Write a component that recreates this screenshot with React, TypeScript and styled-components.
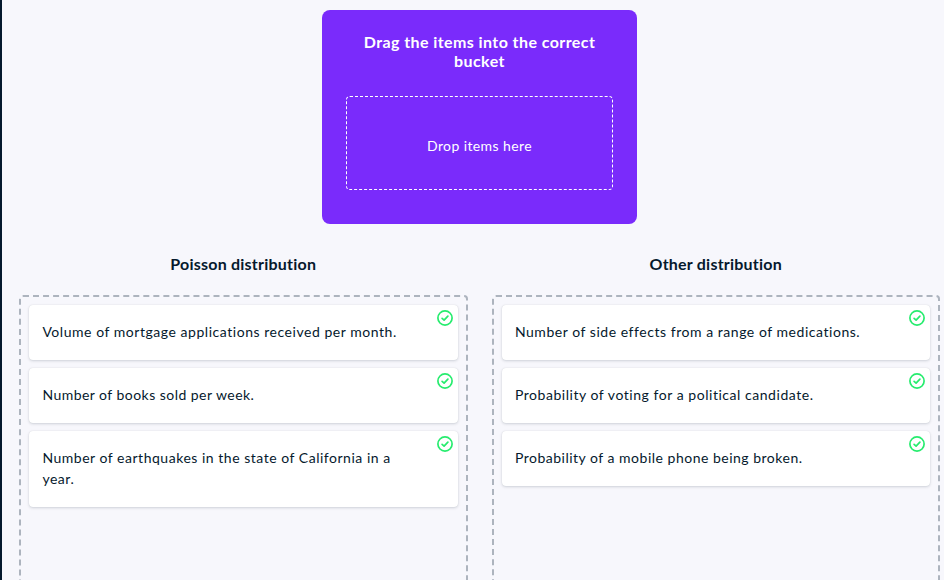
import React from 'react';
import styled, { createGlobalStyle } from 'styled-components';

const GlobalStyle = createGlobalStyle`
  *, *::before, *::after { box-sizing: border-box; }
  body {
    margin: 0;
    background: #f7f7fc;
    color: #05192d;
    font-family: Lato, 'Liberation Sans', sans-serif;
    overflow: hidden;
  }
`;

const Page = styled.main`
  height: 580px;
  padding: 10px 4px 0 17px;
  border-left: 2px solid #05192d;
  display: flex;
  flex-direction: column;
  overflow: hidden;
`;

const Source = styled.section`
  width: 315px;
  height: 214px;
  flex: none;
  align-self: center;
  padding: 22px 24px 24px;
  border-radius: 8px;
  background: #7a2bfb;
  color: #fff;
`;

const Prompt = styled.h2`
  margin: 0 0 26px;
  font-size: 16px;
  line-height: 19px;
  font-weight: 700;
  letter-spacing: 0.42px;
  text-align: center;
`;

const DropArea = styled.div`
  height: 94px;
  padding-top: 4px;
  display: flex;
  align-items: center;
  justify-content: center;
  border: 1px dashed #fff;
  border-radius: 4px;
  font-size: 14px;
  line-height: 21px;
  letter-spacing: 0.4px;
`;

const Buckets = styled.div`
  display: grid;
  grid-template-columns: 1fr 1fr;
  column-gap: 24px;
  margin-top: 30px;
`;

const Bucket = styled.section`
  display: flex;
  flex-direction: column;
`;

const BucketTitle = styled.h3`
  margin: 0 0 22px;
  font-size: 16px;
  line-height: 19px;
  font-weight: 700;
  letter-spacing: 0.22px;
  text-align: center;
`;

const BucketBody = styled.div`
  height: 320px;
  padding: 8px;
  display: flex;
  flex-direction: column;
  gap: 8px;
  border: 2px dashed #adb4be;
  border-radius: 4px;
`;

const Item = styled.div<{ $tracking: number }>`
  position: relative;
  padding: 16px 60px 18px 13.4px;
  border-radius: 4px;
  background: #fff;
  box-shadow: 0 0 1px rgba(5, 25, 45, 0.12), 0 1px 3px rgba(5, 25, 45, 0.16);
  font-size: 14px;
  line-height: 21px;
  letter-spacing: ${(p) => p.$tracking}px;
`;

const Check = styled.svg`
  position: absolute;
  top: 5px;
  right: 5px;
  width: 16px;
  height: 16px;
`;

const buckets = [
  {
    title: 'Poisson distribution',
    items: [
      { text: 'Volume of mortgage applications received per month.', tracking: 0.54 },
      { text: 'Number of books sold per week.', tracking: 0.46 },
      { text: 'Number of earthquakes in the state of California in a year.', tracking: 0.52 },
    ],
  },
  {
    title: 'Other distribution',
    items: [
      { text: 'Number of side effects from a range of medications.', tracking: 0.54 },
      { text: 'Probability of voting for a political candidate.', tracking: 0.54 },
      { text: 'Probability of a mobile phone being broken.', tracking: 0.5 },
    ],
  },
];

export default function App() {
  return (
    <>
      <GlobalStyle />
      <Page>
        <Source>
          <Prompt>Drag the items into the correct bucket</Prompt>
          <DropArea>Drop items here</DropArea>
        </Source>
        <Buckets>
          {buckets.map((bucket) => (
            <Bucket key={bucket.title}>
              <BucketTitle>{bucket.title}</BucketTitle>
              <BucketBody>
                {bucket.items.map((item) => (
                  <Item key={item.text} $tracking={item.tracking}>
                    {item.text}
                    <Check viewBox="0 0 16 16" fill="none" stroke="#26ec6e">
                      <circle cx="8" cy="8" r="7.1" strokeWidth="1.7" />
                      <path d="M5.1 8.4 7.1 10.2 10.9 6.2" strokeWidth="1.7" strokeLinecap="round" strokeLinejoin="round" />
                    </Check>
                  </Item>
                ))}
              </BucketBody>
            </Bucket>
          ))}
        </Buckets>
      </Page>
    </>
  );
}
